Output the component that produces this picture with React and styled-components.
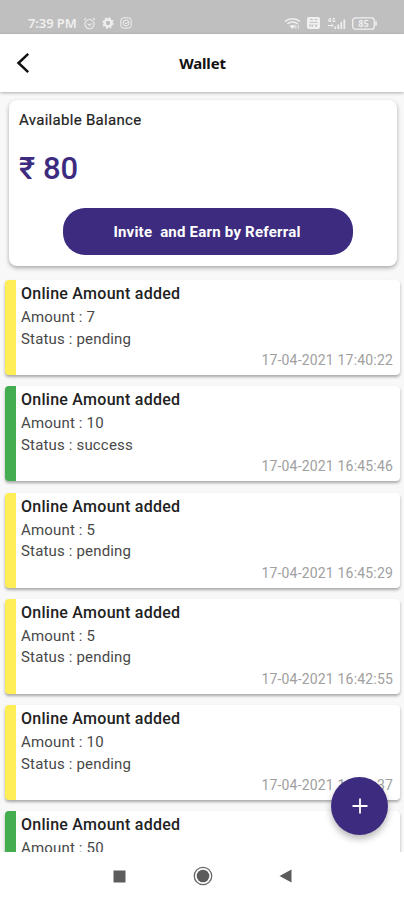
import React from "react";
import styled, { createGlobalStyle } from "styled-components";

const PURPLE = "#3d2b80";

const GlobalStyle = createGlobalStyle`
  * { box-sizing: border-box; }
  body { margin: 0; background: #fff; font-family: Roboto, "Noto Sans", sans-serif; }
`;

const Screen = styled.div`
  position: relative;
  width: 404px;
  height: 900px;
  display: flex;
  flex-direction: column;
  overflow: hidden;
  background: #f8f8f8;
`;

const StatusBar = styled.div`
  height: 34px;
  flex: none;
  display: flex;
  align-items: flex-start;
  justify-content: space-between;
  padding: 15px 27px 0 28px;
  background: #bfbfbf;
  color: #f0f0f0;
`;

const StatusGroup = styled.div`
  height: 16px;
  display: flex;
  align-items: center;
  gap: ${(p) => p.$gap}px;
  svg { display: block; flex: none; }
`;

const Clock = styled.span`
  font: 600 13px/16px "Noto Sans", sans-serif;
  letter-spacing: -0.1px;
  width: 49px;
  white-space: nowrap;
`;

const Header = styled.header`
  position: relative;
  z-index: 1;
  height: 58px;
  flex: none;
  display: grid;
  grid-template-columns: 60px 1fr 60px;
  align-items: center;
  background: #fff;
  box-shadow: 0 1px 3px rgba(0, 0, 0, 0.3);
`;

const BackButton = styled.button`
  border: 0;
  padding: 0 0 0 16px;
  background: none;
  display: flex;
`;

const PageTitle = styled.h1`
  margin: 0;
  padding-left: 1px;
  text-align: center;
  font: 700 15px/20px "Noto Sans", sans-serif;
  letter-spacing: -0.2px;
  color: #111;
`;

const Content = styled.main`
  flex: 1;
  min-height: 0;
  overflow: hidden;
  display: flex;
  flex-direction: column;
  padding: 8px 4px 0 5px;
`;

const BalanceCard = styled.section`
  height: 166px;
  flex: none;
  margin: 0 3px 14px 4px;
  padding: 10px 10px 11px;
  display: flex;
  flex-direction: column;
  border-radius: 8px;
  background: #fff;
  box-shadow: 0 2px 4px rgba(0, 0, 0, 0.32);
`;

const BalanceLabel = styled.div`
  font-size: 15px;
  line-height: 20px;
  letter-spacing: 0.3px;
  color: #222;
  -webkit-text-stroke: 0.2px #222;
`;

const Balance = styled.div`
  margin-top: 20px;
  font-size: 31px;
  line-height: 38px;
  font-weight: 500;
  color: ${PURPLE};
`;

const InviteButton = styled.button`
  margin: auto auto 0 44px;
  width: 290px;
  height: 47px;
  border: 0;
  padding: 0 2px 0 0;
  border-radius: 22px;
  background: ${PURPLE};
  color: #fff;
  font: 700 15px/20px Roboto, sans-serif;
  letter-spacing: 0.22px;
  white-space: pre;
`;

const List = styled.div`
  flex: none;
  display: flex;
  flex-direction: column;
  gap: 11.3px;
`;

const Row = styled.article`
  height: 95px;
  padding: 3px 7px 6px 5px;
  display: flex;
  flex-direction: column;
  border-left: 11px solid ${(p) => (p.$success ? "#43ad50" : "#ffee58")};
  border-radius: 4px;
  background: #fff;
  box-shadow: 0 2px 3px rgba(0, 0, 0, 0.32);
`;

const RowTitle = styled.div`
  font-size: 16px;
  line-height: 21px;
  font-weight: 500;
  letter-spacing: 0.26px;
  color: #222;
  margin-bottom: 3px;
`;

const Detail = styled.div`
  font-size: 15px;
  line-height: 21.5px;
  letter-spacing: 0.17px;
  color: #484848;
`;

const Timestamp = styled.time`
  align-self: flex-end;
  margin-top: auto;
  font-size: 14px;
  line-height: 18px;
  letter-spacing: 0.18px;
  color: #a0a0a0;
`;

const AddButton = styled.button`
  position: absolute;
  left: 331px;
  top: 777px;
  z-index: 2;
  width: 57px;
  height: 58px;
  border: 0;
  border-radius: 50%;
  padding: 0;
  display: grid;
  place-items: center;
  background: ${PURPLE};
  box-shadow: 0 4px 7px rgba(0, 0, 0, 0.28);
`;

const NavBar = styled.nav`
  height: 48px;
  flex: none;
  display: flex;
  align-items: center;
  justify-content: center;
  gap: 66.5px;
  padding-left: 1px;
  background: #fff;
  svg { display: block; }
`;

const entries = [
  { amount: 7, status: "pending", time: "17-04-2021 17:40:22" },
  { amount: 10, status: "success", time: "17-04-2021 16:45:46" },
  { amount: 5, status: "pending", time: "17-04-2021 16:45:29" },
  { amount: 5, status: "pending", time: "17-04-2021 16:42:55" },
  { amount: 10, status: "pending", time: "17-04-2021 16:40:37" },
  { amount: 50, status: "success" },
];

const AlarmIcon = () => (
  <svg width="13" height="13" viewBox="0 0 14 14" fill="none" stroke="currentColor" strokeWidth="1.1">
    <circle cx="7" cy="7.6" r="5" />
    <path d="M1 3.2 3.4 1.2M13 3.2 10.6 1.2M4.8 7.2 7 9l2.4-2" />
  </svg>
);

const GearIcon = () => (
  <svg width="12" height="12" viewBox="0 0 12 12" fill="none" stroke="currentColor">
    <circle cx="6" cy="6" r="3.4" strokeWidth="2.2" />
    <circle cx="6" cy="6" r="4.9" strokeWidth="1.6" strokeDasharray="2 1.85" />
  </svg>
);

const FaceIcon = () => (
  <svg width="12" height="12" viewBox="0 0 12 12" fill="none" stroke="currentColor">
    <rect x="0.8" y="0.8" width="10.4" height="10.4" rx="3" />
    <circle cx="6" cy="6" r="3" />
    <path d="M4.5 5.6 6 7l3-3" />
  </svg>
);

const WifiIcon = () => (
  <svg width="17" height="13" viewBox="0 0 17 13" fill="none" stroke="currentColor" strokeWidth="1.5">
    <path d="M1 4.5C5.3.8 11.7.8 16 4.5M3.3 7c3-2.7 7.4-2.7 10.4 0" />
    <path d="M5.5 9.1c1.8-1.6 4.2-1.6 6 0L8.5 12Z" fill="currentColor" stroke="none" />
    <path d="M11.8 12V7.8m2.5 4.2V7.8" strokeWidth="0.9" />
  </svg>
);

const SimIcon = () => (
  <svg width="13" height="12" viewBox="0 0 13 12">
    <rect width="13" height="12" rx="2" fill="currentColor" />
    <path d="M3 2.5h3M7.5 2.5h2.8M2.5 5.3h8M3 9.8V7.4l2.4 2.4V7.4M7.8 7.4l1.2 2.3 1.2-2.3" fill="none" stroke="#bfbfbf" />
  </svg>
);

const SignalIcon = () => (
  <svg width="19" height="13" viewBox="0 0 19 13" fill="none" stroke="currentColor">
    <path d="M3.3 5V1L1 4h3.2M8 1.5H6v3h2V3.2M1 8.5h5M4.5 7l1.8 1.5L4.5 10" />
    <path d="M8.3 12V9.5M11.3 12V7.5M14.3 12V5M17.3 12V2.5" strokeWidth="1.7" />
  </svg>
);

const BatteryIcon = () => (
  <svg width="25" height="13" viewBox="0 0 25 13" fill="none" stroke="currentColor">
    <rect x="0.7" y="0.8" width="21.5" height="11.4" rx="2.8" strokeWidth="1.3" />
    <path d="M24 4.3v4.4" strokeWidth="1.6" />
    <text x="11.5" y="9.7" textAnchor="middle" fill="currentColor" stroke="none" fontSize="9" fontWeight="700">85</text>
  </svg>
);

export default function App() {
  return (
    <>
      <GlobalStyle />
      <Screen>
        <StatusBar>
          <StatusGroup $gap={6}>
            <Clock>7:39 PM</Clock>
            <AlarmIcon />
            <GearIcon />
            <FaceIcon />
          </StatusGroup>
          <StatusGroup $gap={6.4}>
            <WifiIcon />
            <SimIcon />
            <SignalIcon />
            <BatteryIcon />
          </StatusGroup>
        </StatusBar>
        <Header>
          <BackButton aria-label="Back">
            <svg width="14" height="22" viewBox="0 0 14 22" fill="none" stroke="#111" strokeWidth="2.5">
              <path d="M12.2 1.8 2.5 11l9.7 9.2" />
            </svg>
          </BackButton>
          <PageTitle>Wallet</PageTitle>
        </Header>
        <Content>
          <BalanceCard>
            <BalanceLabel>Available Balance</BalanceLabel>
            <Balance>₹ 80</Balance>
            <InviteButton>{"Invite  and Earn by Referral"}</InviteButton>
          </BalanceCard>
          <List>
            {entries.map((e, i) => (
              <Row key={i} $success={e.status === "success"}>
                <RowTitle>Online Amount added</RowTitle>
                <Detail>Amount : {e.amount}</Detail>
                {e.time && <Detail>Status : {e.status}</Detail>}
                {e.time && <Timestamp>{e.time}</Timestamp>}
              </Row>
            ))}
          </List>
        </Content>
        <AddButton aria-label="Add money">
          <svg width="16" height="16" viewBox="0 0 16 16" stroke="#fff" strokeWidth="1.8">
            <path d="M8 .5v15M.5 8h15" />
          </svg>
        </AddButton>
        <NavBar>
          <svg width="13" height="13" viewBox="0 0 13 13"><rect x="0.5" y="0.5" width="12" height="12" fill="#5c5c5c" /></svg>
          <svg width="20" height="20" viewBox="0 0 20 20">
            <circle cx="10" cy="10" r="8.7" fill="none" stroke="#666" strokeWidth="1.3" />
            <circle cx="10" cy="10" r="6.3" fill="#5c5c5c" />
          </svg>
          <svg width="13" height="14" viewBox="0 0 13 14"><path d="M12.5.5v13L.5 7Z" fill="#5c5c5c" /></svg>
        </NavBar>
      </Screen>
    </>
  );
}
